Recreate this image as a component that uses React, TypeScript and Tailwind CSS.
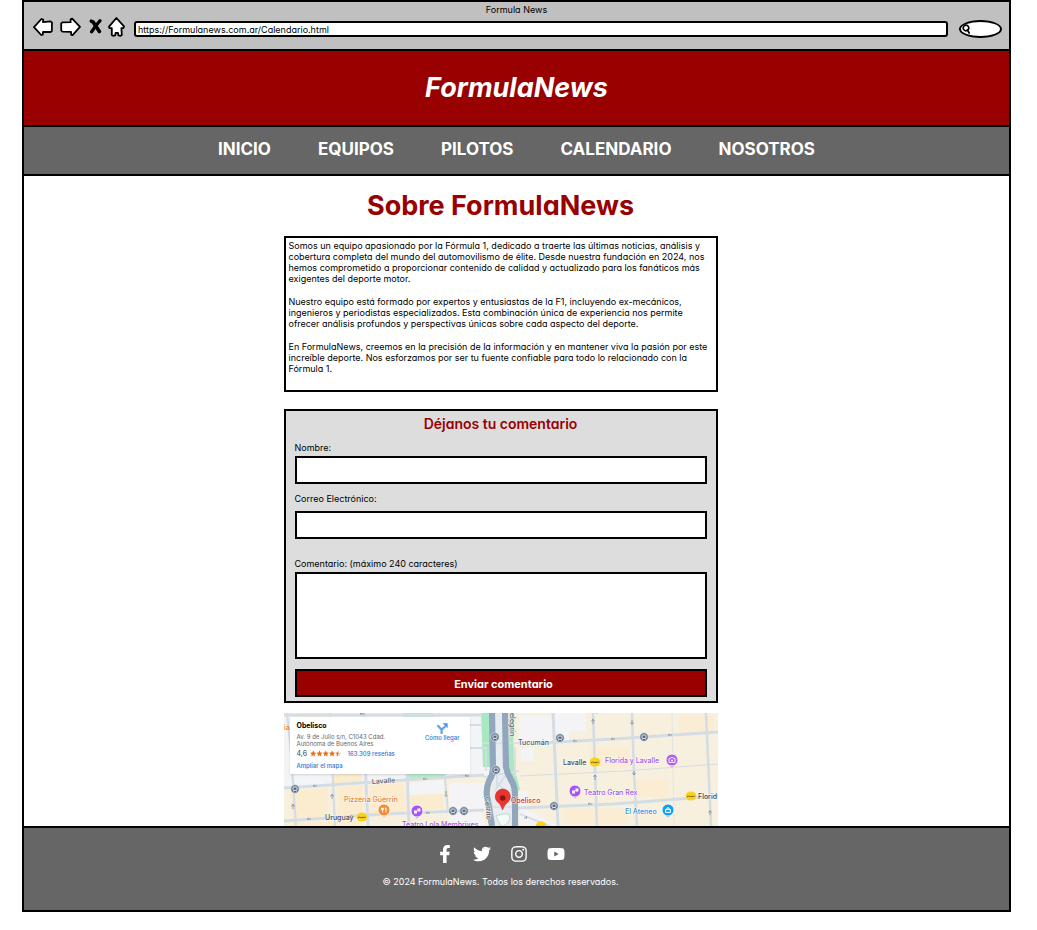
import type { ReactNode } from "react";
import { FaFacebookF, FaInstagram, FaTwitter, FaYoutube } from "react-icons/fa";

const navItems = ["INICIO", "EQUIPOS", "PILOTOS", "CALENDARIO", "NOSOTROS"];

const socials = [
  { name: "Facebook", icon: <FaFacebookF size={18} /> },
  { name: "Twitter", icon: <FaTwitter size={18} /> },
  { name: "Instagram", icon: <FaInstagram size={18} /> },
  { name: "YouTube", icon: <FaYoutube size={18} /> },
];

function ToolButton({ label, children }: { label: string; children: ReactNode }) {
  return (
    <button type="button" aria-label={label} className="shrink-0">
      {children}
    </button>
  );
}

function BrowserBar() {
  return (
    <div className="border-b-2 border-black bg-[#c0c0c0] pt-[2px] pb-[11px]">
      <p className="text-center text-[9px] leading-3">Formula News</p>
      <div className="flex items-center pr-[7px] pl-[9px]">
        <ToolButton label="Atrás">
          <svg width="20" height="20" viewBox="0 0 20 20" fill="white" stroke="black" strokeWidth="1.8" strokeLinejoin="round">
            <path d="M1 10.2 L8.4 2 L10.2 2.6 L10 5.2 L17.6 4.4 L19 5.6 L18.8 14.2 L17.6 15 L10 14.8 L9.8 17.6 L8.2 18 Z" />
          </svg>
        </ToolButton>
        <div className="ml-[7px] flex">
          <ToolButton label="Adelante">
            <svg width="21" height="20" viewBox="0 0 21 20" fill="white" stroke="black" strokeWidth="1.8" strokeLinejoin="round">
              <path d="M1.2 6.4 L2.4 5.4 L10.6 5.2 L10.6 2.4 L12.2 1.6 L20 9.8 L12.6 18.2 L11.2 17.8 L11 14.8 L2.4 14.6 L1.2 13.4 Z" />
            </svg>
          </ToolButton>
        </div>
        <div className="ml-2 flex">
          <ToolButton label="Detener">
            <svg width="13" height="20" viewBox="0 0 13 20" fill="none" stroke="black" strokeLinecap="round">
              <path d="M2.4 4.2 L4.2 5.2 L10.4 14.4" strokeWidth="3.6" />
              <path d="M11 3.8 L7 8.6 L2.6 14.8" strokeWidth="3.2" />
            </svg>
          </ToolButton>
        </div>
        <div className="ml-[6px] flex">
          <ToolButton label="Inicio">
            <svg width="17" height="20" viewBox="0 0 17 20" fill="white" stroke="black" strokeWidth="1.8" strokeLinejoin="round">
              <path d="M8.4 1 L16 9.4 L15.4 11 L13.4 11.2 L13.8 18 L12.6 18.8 L10.4 18.4 L10 15.8 L7.6 15.8 L7.2 18.4 L5 18.8 L3.8 18 L3.8 11.2 L1.4 11 L1 9.6 Z" />
            </svg>
          </ToolButton>
        </div>
        <input
          aria-label="Dirección"
          defaultValue="https://Formulanews.com.ar/Calendario.html"
          className="mt-1 ml-[9px] h-4 min-w-0 flex-1 rounded-[3px] border-2 border-black bg-white px-[2px] text-[9px] outline-none"
        />
        <label className="mt-1 ml-[11px] flex h-[18px] w-[43px] shrink-0 items-center rounded-[50%/50%] border-2 border-black bg-white pl-[1px] [border-radius:14px/9px]">
          <svg width="9" height="10" viewBox="0 0 9 10" fill="none" stroke="black" strokeWidth="1.7" strokeLinecap="round" className="shrink-0">
            <circle cx="4" cy="4" r="2.8" />
            <path d="M5.4 6 L7.2 9" />
          </svg>
          <input aria-label="Buscar" className="w-full min-w-0 bg-transparent text-[9px] outline-none" />
        </label>
      </div>
    </div>
  );
}

function Stop({ x, y }: { x: number; y: number }) {
  return (
    <g transform={`translate(${x} ${y})`}>
      <circle r="4.2" fill="#51677e" stroke="#e6ebef" strokeWidth="0.8" />
      <rect x="-2" y="-2" width="4" height="3.4" rx="0.6" fill="none" stroke="white" strokeWidth="0.9" />
      <path d="M-1.6 2.4h0.6M1 2.4h0.6" stroke="white" strokeWidth="0.8" />
    </g>
  );
}

function Subte({ x, y }: { x: number; y: number }) {
  return (
    <g transform={`translate(${x} ${y})`}>
      <ellipse rx="5.4" ry="4.6" fill="#fbd11b" />
      <path d="M-4 0.6h1l0.6-0.8 0.8 0.8h1l0.6-0.7 0.8 0.7h1.2l0.6-0.6 1.2 0.4" fill="none" stroke="#6b5d1e" strokeWidth="1" />
    </g>
  );
}

function Place({ x, y, color, children }: { x: number; y: number; color: string; children: ReactNode }) {
  return (
    <g transform={`translate(${x} ${y})`}>
      <path d="M-4 4.4 L0 7.6 L4 4.4Z" fill={color} opacity="0.6" />
      <circle r="6" fill={color} stroke="white" strokeWidth="0.8" />
      {children}
    </g>
  );
}

function MapDrawing() {
  return (
    <svg viewBox="0 0 434 113" className="block w-full" role="img" aria-label="Mapa del Obelisco">
      <rect width="434" height="113" fill="#f8f0de" />
      <path d="M0 0H205V62L100 70 0 76Z" fill="#f3f4f6" />
      <path d="M14 0H46V12H14Z M50 30H78V70L50 72Z M6 78L44 75V103L8 106Z M53 74L78 72 80 101 54 103Z M86 72L120 69 122 98 86 101Z M126 82L158 81 160 96 128 98Z M8 109H78V113H8Z" fill="#fbebcf" />
      <path d="M165 70H200V113H165Z M126 70L160 67V80L126 82Z" fill="#f4f4f6" />
      <path d="M119 0H149L160 18V64L123 67Z" fill="#b5edc8" />
      <path d="M197 0H206V54H199Z" fill="#a9e9c2" />
      <path d="M211 0H219V58L227 77V113H207V78L211 62Z" fill="#e8ecf1" />
      <path d="M225 0H229L230 54 236 76 233 80 225 62Z" fill="#a9e9c2" />
      <path d="M235 3H268V28H235Z M272 0H302V18H285V28H272Z M236 35H250V48H238Z M235 78H245L240 95 275 113H236Z" fill="#f4f4f6" />
      <path d="M306 34H346V54H306Z M350 66H385V84H350Z M395 3H430V21H395Z M280 96H344V110H280Z" fill="#fbedd3" />
      <g fill="none" stroke="#d5dde4">
        <path d="M3 0L7 40 12 113M46 0L51 113M155 0L164 99M314 0L311 0" strokeWidth="2.2" />
        <path d="M309 0L313 113M348 0L350 60 353 113M422 0L427 113" strokeWidth="2.6" />
        <path d="M388 0L390 113" strokeWidth="0.6" />
        <path d="M79 0L82 70 84 113M121 0L125 113M269 0L274 113" strokeWidth="3" />
        <path d="M0 75L90 69 200 62M0 108L100 101 200 97M0 2H198M236 31L330 26 434 19M234 95L330 91 434 83" strokeWidth="3" />
        <path d="M236 63L340 58 434 51" strokeWidth="1.2" />
        <path d="M236 101L266 113M160 12H198M160 35H203" strokeWidth="1.8" />
        <path d="M198 30H235M199 64L235 58M205 94H234M202 35V58M231 34V64M213 58V74M223 60L211 78" strokeWidth="1.6" />
        <path d="M213 69L229 87M214 84L226 90" strokeWidth="1.4" />
      </g>
      <path d="M208 0L209 56Q209 62 205 68Q201 78 204 88L208 113" fill="none" stroke="#91a7be" strokeWidth="6.2" />
      <path d="M221 0L222 54Q223 60 227 67Q231 73 231 83V113" fill="none" stroke="#91a7be" strokeWidth="6.2" />
      <path d="M212 103L218 101 225 101 226 107 220 113H217Z" fill="#f6faf6" stroke="#b5dfc7" strokeWidth="1" />
      <g fill="none" stroke="#7d8a98" strokeWidth="0.8">
        <path d="M29 73h4m-4 0 1.5-1M139 66h4m-4 0 1.5-1M181 63h4m-4 0 1.5-1M23 106h4m-4 0 1.5-1M66 103h4m-4 0 1.5-1M142 100h4m-4 0 1.5-1M76 1h5m-5 0 2-1" />
        <path d="M289 28h4m-4 0 1.5-1M327 26h4m-4 0 1.5-1M384 22h4m-4 0 1.5-1M304 91h4m-4 0 1.5-1M240 105h3l-1-2" />
        <path d="M9 92v4m-1.5-2.5L9 91l1.5 2.5M48 82v4m-1.5-2.5L48 81l1.5 2.5M162 78v4m-1.5 0 1.5 1.5 1.5-1.5M309 11v-4m-1.5 1.5L309 6l1.5 2.5M348 7v4m-1.5-1.5 1.5 2 1.5-2M311 62v5m-1.5-3 1.5-2 1.5 2M350 58v4m-1.5-2 1.5 2 1.5-2M426 98v4m-1.5-2.5 1.5-2 1.5 2" />
      </g>

      <Stop x={11} y={76} />
      <Stop x={169} y={98} />
      <Stop x={180} y={98} />
      <Stop x={211} y={24} />
      <Stop x={212} y={57} />
      <Stop x={276} y={25} />
      <Stop x={360} y={24} />
      <Stop x={270} y={93} />
      <Subte x={78} y={104} />
      <Subte x={311} y={49} />
      <Subte x={407} y={83} />
      <Subte x={257} y={113} />
      <Place x={100} y={97} color="#f48b35">
        <path d="M-2.4-2.2v2h2v-2M-1.4-2.2V2.6M2-2.2V2.6M2-2.4Q0.6-1 2 0.4" stroke="white" strokeWidth="0.9" fill="none" />
      </Place>
      <Place x={133} y={98} color="#a855f7">
        <path d="M-3-0.6h3v3h-3zM0.4-2.6h3v3h-3z" fill="white" />
      </Place>
      <Place x={291} y={78} color="#a855f7">
        <path d="M-3-0.6h3v3h-3zM0.4-2.6h3v3h-3z" fill="white" />
      </Place>
      <Place x={388} y={47} color="#b05cf5">
        <path d="M-3-1.6h1.4l0.6-1h2l0.6 1H3v4h-6z" fill="none" stroke="white" strokeWidth="0.9" />
        <circle cy="0.4" r="1" fill="white" />
      </Place>
      <Place x={384} y={97} color="#12a0ee">
        <path d="M-2.4-0.6h4.8v3h-4.8zM-1.4-0.6Q0-4.6 1.4-0.6" fill="none" stroke="white" strokeWidth="1" />
      </Place>
      <path d="M218.5 97Q217 91 213 88.5A7.6 7.6 0 1 1 224.6 88.5Q220.6 91 218.5 97Z" fill="#e8362e" stroke="#c5221f" strokeWidth="0.5" />
      <circle cx="218.7" cy="85" r="2.8" fill="#8f1612" />

      <g fontFamily="Inter, sans-serif" fontSize="7" fontWeight="500" stroke="white" strokeWidth="1.2" paintOrder="stroke" strokeOpacity="0.7">
        <text x="0" y="17" fill="#e07b39">ia</text>
        <text x="88" y="71" fill="#53606e" transform="rotate(-4 88 71)">Lavalle</text>
        <text x="60" y="89" fill="#e27c3c">Pizzería Güerrin</text>
        <text x="41" y="107" fill="#3e4956">Uruguay</text>
        <text x="118" y="114" fill="#a259e6">Teatro Lola Membrives</text>
        <text x="227" y="90" fill="#cf3732">Obelisco</text>
        <text x="234" y="32" fill="#53606e">Tucumán</text>
        <text x="279" y="52" fill="#3e4956">Lavalle</text>
        <text x="321" y="50" fill="#a259e6">Florida y Lavalle</text>
        <text x="300" y="82" fill="#a259e6">Teatro Gran Rex</text>
        <text x="341" y="101" fill="#3b91dc">El Ateneo</text>
        <text x="414" y="86" fill="#3e4956">Florid</text>
        <text transform="translate(226 0) rotate(90)" fill="#53606e">elegrín</text>
        <text transform="translate(201 84) rotate(86)" fill="#53606e">Cerrito</text>
      </g>
    </svg>
  );
}

function ObeliscoMap() {
  return (
    <section className="relative mt-[10px] overflow-hidden [font-feature-settings:normal]">
      <MapDrawing />
      <div className="absolute top-1 left-[6px] flex h-[57px] w-[180px] justify-between rounded-[1px] bg-white pt-1 pr-[10px] pl-[7px] text-[6px] leading-[7px] shadow-sm">
        <div className="whitespace-nowrap">
          <h3 className="text-[7px] leading-[10px] font-bold text-black">Obelisco</h3>
          <p className="mt-[2px] text-[#65686c]">
            Av. 9 de Julio s/n, C1043 Cdad.
            <br />
            Autónoma de Buenos Aires
          </p>
          <p className="mt-[3px] flex items-center">
            <span className="w-[13px] text-[7px] text-[#444]">4,6</span>
            <svg width="32" height="7" viewBox="0 0 32 7" fill="#e7711b" aria-label="4,6 estrellas">
              {[0, 1, 2, 3].map((n) => (
                <path key={n} transform={`translate(${n * 6.3} 0)`} d="M3.2 0.3 4.1 2.5 6.3 2.7 4.7 4.2 5.2 6.5 3.2 5.3 1.2 6.5 1.7 4.2 0.1 2.7 2.3 2.5Z" />
              ))}
              <path transform="translate(25.2 0)" d="M3.2 0.3 4.1 2.5 6.3 2.7 4.7 4.2 5.2 6.5 3.2 5.3Z" fill="#dadce0" />
              <path transform="translate(25.2 0)" d="M3.2 0.3V5.3L1.2 6.5 1.7 4.2 0.1 2.7 2.3 2.5Z" />
            </svg>
            <a href="#resenas" className="ml-[6px] font-medium text-[#2d77cf]">163.309 reseñas</a>
          </p>
          <a href="#mapa" className="mt-[5px] block font-medium text-[#2d77cf]">Ampliar el mapa</a>
        </div>
        <a href="#llegar" className="flex flex-col items-center pt-[2px] font-medium whitespace-nowrap text-[#2d77cf]">
          <svg width="12" height="11" viewBox="0 0 12 11" fill="none" stroke="#63a0e6" strokeWidth="2.2">
            <path d="M5.6 11V6.6L9.4 3.2M5.6 6.8L1.6 2.2" />
            <path d="M6.6 0.2H11.6V5.2Z" fill="#4a90e2" stroke="none" />
          </svg>
          <span>Cómo llegar</span>
        </a>
      </div>
    </section>
  );
}

const fieldClass = "block w-full border-2 border-black bg-white px-2 text-[10px] outline-none";

function CommentForm() {
  return (
    <form
      className="mt-[17px] border-2 border-black bg-[#dddddd] px-[9px] pb-1 text-[9px] leading-3"
      onSubmit={(event) => event.preventDefault()}
    >
      <h2 className="text-center text-[14px] leading-[26px] font-semibold text-[#990000]">Déjanos tu comentario</h2>
      <label htmlFor="nombre" className="mt-[5px] block">Nombre:</label>
      <input id="nombre" type="text" className={`${fieldClass} mt-[2px] h-7`} />
      <label htmlFor="correo" className="mt-[9px] block">Correo Electrónico:</label>
      <input id="correo" type="email" className={`${fieldClass} mt-[6px] h-7`} />
      <label htmlFor="comentario" className="mt-[19px] block">Comentario: (máximo 240 caracteres)</label>
      <textarea id="comentario" maxLength={240} className={`${fieldClass} mt-[2px] h-[87px] resize-none`} />
      <button type="submit" className="mt-[10px] block h-7 w-full border-2 border-black bg-[#990000] pt-[2px] pl-[6px] text-[11px] font-bold text-white">
        Enviar comentario
      </button>
    </form>
  );
}

export default function App() {
  return (
    <div className="mr-[26px] ml-[22px] border-x-2 border-t-2 border-black bg-white font-['Inter',sans-serif] text-black [font-feature-settings:'cv11']">
      <BrowserBar />
      <header className="border-b-2 border-black bg-[#990000] py-[18px] text-center text-[27px] leading-[38px] font-bold text-white italic">
        FormulaNews
      </header>
      <nav className="flex justify-center gap-[47px] border-b-2 border-black bg-[#666666] pt-[10px] pb-[13px] text-[17px] leading-6 font-bold text-white">
        {navItems.map((item) => (
          <a key={item} href={`#${item.toLowerCase()}`}>{item}</a>
        ))}
      </nav>
      <main className="border-b-2 border-black pt-3 pr-8">
        <div className="mx-auto w-full max-w-[434px]">
          <h1 className="text-center text-[27px] leading-9 font-bold text-[#990000]">Sobre FormulaNews</h1>
          <section className="mt-3 flex flex-col gap-3 border-2 border-black px-[3px] pt-[2px] pb-4 text-[9px] leading-[11px]">
            <p>
              Somos un equipo apasionado por la Fórmula 1, dedicado a traerte las últimas noticias, análisis y
              <br />
              cobertura completa del mundo del automovilismo de élite. Desde nuestra fundación en 2024, nos
              <br />
              hemos comprometido a proporcionar contenido de calidad y actualizado para los fanáticos más
              <br />
              exigentes del deporte motor.
            </p>
            <p>
              Nuestro equipo está formado por expertos y entusiastas de la F1, incluyendo ex-mecánicos,
              <br />
              ingenieros y periodistas especializados. Esta combinación única de experiencia nos permite
              <br />
              ofrecer análisis profundos y perspectivas únicas sobre cada aspecto del deporte.
            </p>
            <p>
              En FormulaNews, creemos en la precisión de la información y en mantener viva la pasión por este
              <br />
              increíble deporte. Nos esforzamos por ser tu fuente confiable para todo lo relacionado con la
              <br />
              Fórmula 1.
            </p>
          </section>
          <CommentForm />
          <ObeliscoMap />
        </div>
      </main>
      <footer className="border-b-2 border-black bg-[#666666] pt-[17px] pr-8 pb-[21px] text-center text-white">
        <div className="flex justify-center gap-[19px]">
          {socials.map((social) => (
            <a key={social.name} href={`#${social.name.toLowerCase()}`} aria-label={social.name}>
              {social.icon}
            </a>
          ))}
        </div>
        <p className="mt-3 text-[9px] leading-[14px]">© 2024 FormulaNews. Todos los derechos reservados.</p>
      </footer>
    </div>
  );
}
